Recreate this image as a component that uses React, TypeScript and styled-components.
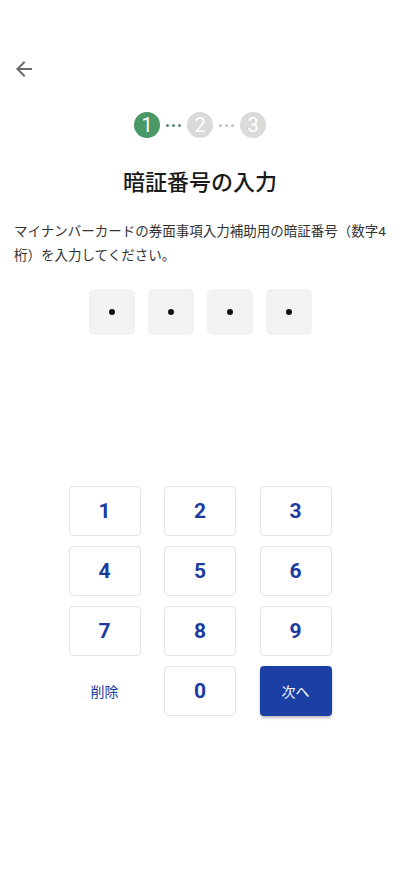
import React from "react";
import styled, { createGlobalStyle } from "styled-components";

const GlobalStyle = createGlobalStyle`
  html, body {
    margin: 0;
    padding: 0;
    background: #ffffff;
  }
  body {
    font-family: "Roboto", "Noto Sans CJK JP", sans-serif;
    color: #222222;
  }
`;

const Page = styled.div`
  width: 400px;
  min-height: 889px;
  padding-top: 57px;
  box-sizing: border-box;
  display: flex;
  flex-direction: column;
`;

const BackButton = styled.button`
  width: 24px;
  height: 24px;
  margin-left: 12px;
  padding: 0;
  border: none;
  background: none;
  display: flex;
  align-items: center;
  justify-content: center;
  color: #6b6b6b;
`;

const Stepper = styled.div`
  margin-top: 31px;
  display: flex;
  align-items: center;
  justify-content: center;
  gap: 4px;
`;

const StepCircle = styled.div<{ $active?: boolean }>`
  width: 26px;
  height: 26px;
  border-radius: 50%;
  background: ${p => (p.$active ? "#4a9865" : "#dadada")};
  color: #ffffff;
  font-family: "Roboto", sans-serif;
  font-size: 20px;
  line-height: 1;
  display: flex;
  align-items: center;
  justify-content: center;
`;

const Dots = styled.div<{ $done?: boolean }>`
  display: flex;
  gap: 3px;
  padding: 0 2px;
  span {
    width: 3px;
    height: 3px;
    border-radius: 50%;
    background: ${p => (p.$done ? "#5d8a6d" : "#c4c4c4")};
  }
`;

const Title = styled.h1`
  margin: 26px 0 0;
  text-align: center;
  font-family: "Noto Sans CJK JP", sans-serif;
  font-size: 22px;
  font-weight: 500;
  line-height: 32px;
  color: #1a1a1a;
`;

const Lead = styled.p`
  margin: 23px 0 0;
  padding: 0 12px 0 14px;
  font-family: "Roboto", "Noto Sans CJK JP", sans-serif;
  font-size: 13.5px;
  line-height: 24px;
  color: #333333;
`;

const PinRow = styled.div`
  margin-top: 22px;
  display: flex;
  justify-content: center;
  gap: 13px;
`;

const PinBox = styled.div`
  width: 46px;
  height: 46px;
  border-radius: 5px;
  background: #f2f2f2;
  display: flex;
  align-items: center;
  justify-content: center;
  &::after {
    content: "";
    width: 6px;
    height: 6px;
    border-radius: 50%;
    background: #111111;
  }
`;

const Keypad = styled.div`
  margin-top: 151px;
  display: grid;
  grid-template-columns: repeat(3, 72px);
  grid-auto-rows: 50px;
  column-gap: 23.5px;
  row-gap: 10px;
  justify-content: center;
`;

const Key = styled.button<{ $variant?: "number" | "text" | "primary" }>`
  border-radius: 4px;
  box-sizing: border-box;
  display: flex;
  align-items: center;
  justify-content: center;
  padding: 0;
  cursor: pointer;
  border: ${p => (p.$variant === "number" ? "1px solid #e4e4e4" : "none")};
  background: ${p => (p.$variant === "primary" ? "#1c3fa6" : "#ffffff")};
  color: ${p => (p.$variant === "primary" ? "#ffffff" : "#1b3b9e")};
  box-shadow: ${p =>
    p.$variant === "primary" ? "0 2px 3px rgba(0, 0, 0, 0.25)" : "none"};
  font-family: ${p =>
    p.$variant === "number" ? `"Roboto", sans-serif` : `"Noto Sans CJK JP", sans-serif`};
  font-size: ${p => (p.$variant === "number" ? "21px" : "14px")};
  font-weight: ${p => (p.$variant === "number" ? 700 : 400)};
`;

const digits = ["1", "2", "3", "4", "5", "6", "7", "8", "9"];

export default function App() {
  return (
    <>
      <GlobalStyle />
      <Page>
        <BackButton aria-label="戻る">
          <svg width="24" height="24" viewBox="0 0 24 24" fill="currentColor">
            <path d="M20 11H7.83l5.59-5.59L12 4l-8 8 8 8 1.41-1.41L7.83 13H20v-2z" />
          </svg>
        </BackButton>

        <Stepper>
          <StepCircle $active>1</StepCircle>
          <Dots $done>
            <span />
            <span />
            <span />
          </Dots>
          <StepCircle>2</StepCircle>
          <Dots>
            <span />
            <span />
            <span />
          </Dots>
          <StepCircle>3</StepCircle>
        </Stepper>

        <Title>暗証番号の入力</Title>
        <Lead>
          マイナンバーカードの券面事項入力補助用の暗証番号（数字4桁）を入力してください。
        </Lead>

        <PinRow>
          <PinBox />
          <PinBox />
          <PinBox />
          <PinBox />
        </PinRow>

        <Keypad>
          {digits.map(d => (
            <Key key={d} $variant="number">
              {d}
            </Key>
          ))}
          <Key $variant="text">削除</Key>
          <Key $variant="number">0</Key>
          <Key $variant="primary">次へ</Key>
        </Keypad>
      </Page>
    </>
  );
}
